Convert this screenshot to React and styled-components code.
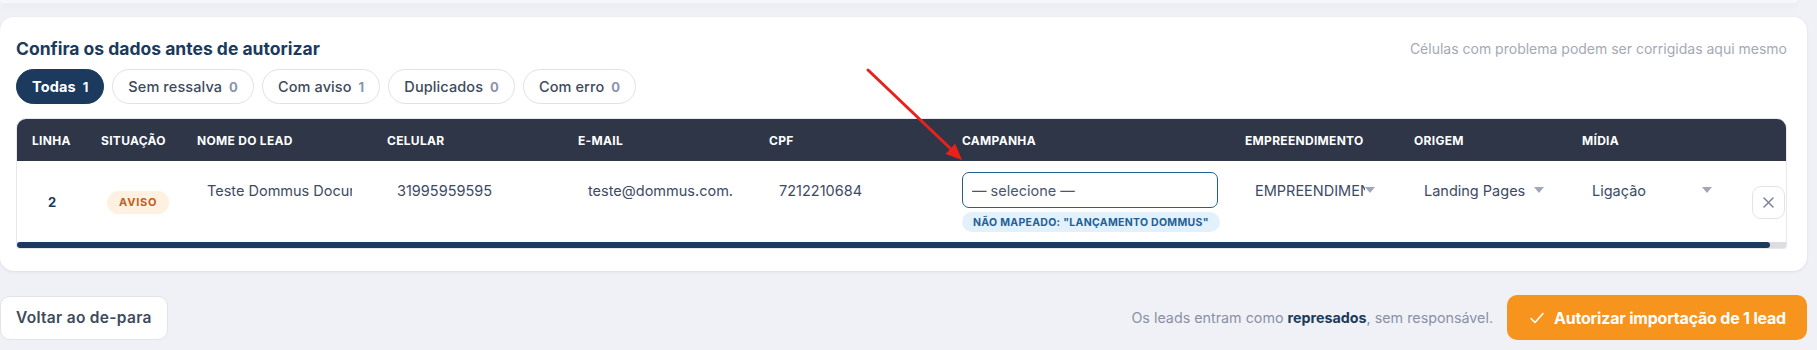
import React from "react";
import styled, { createGlobalStyle } from "styled-components";

const GlobalStyle = createGlobalStyle`
  html, body { margin: 0; padding: 0; background: #f0f1f6; }
  body { font-family: Inter, "Noto Sans", sans-serif; color: #3d4a66; }
  *, *::before, *::after { box-sizing: border-box; }
`;

const Page = styled.div`
  position: relative;
  width: 1817px;
  padding: 0 10px 20px 0;
`;

const PrevCard = styled.div`
  height: 3px;
  margin-right: 10px;
  background: #f6f7fa;
  border-radius: 0 0 14px 14px;
  box-shadow: 0 3px 8px rgba(30, 40, 70, 0.06);
`;

const Card = styled.section`
  margin-top: 14px;
  background: #fff;
  border-radius: 14px;
  padding: 20px 20px 22px 16px;
  box-shadow: 0 1px 3px rgba(20, 30, 60, 0.09);
`;

const TitleRow = styled.div`
  display: flex;
  justify-content: space-between;
  align-items: center;
  height: 22px;
`;

const Title = styled.h2`
  margin: 0;
  font-size: 17.5px;
  font-weight: 700;
  color: #1b3a5c;
`;

const Note = styled.span`
  font-size: 14px;
  color: #a4a9b6;
`;

const Pills = styled.div`
  display: flex;
  gap: 8px;
  margin-top: 10px;
`;

const Pill = styled.button`
  height: 35px;
  padding: 0 15px;
  border-radius: 18px;
  border: 1px solid ${(p) => (p.$active ? "#1b3a5e" : "#dfe2e8")};
  background: ${(p) => (p.$active ? "#1b3a5e" : "#fff")};
  color: ${(p) => (p.$active ? "#fff" : "#3d4a5c")};
  font-family: inherit;
  font-size: 14.5px;
  letter-spacing: 0.1px;
  font-weight: ${(p) => (p.$active ? 700 : 500)};
  display: inline-flex;
  align-items: center;
  gap: 7px;
`;

const Count = styled.span`
  font-weight: 700;
  font-size: 13px;
  color: ${(p) => (p.$active ? "#fff" : "#8c93b0")};
`;

const TableWrap = styled.div`
  margin-top: 14px;
  border: 1px solid #e6e8ec;
  border-radius: 10px 10px 3px 3px;
  overflow: hidden;
`;

const GridRow = styled.div`
  display: grid;
  grid-template-columns: 69px 96px 190px 191px 191px 193px 283px 169px 168px 170px 34px;
  padding: 0 16px 0 15px;
  width: max-content;
  min-width: 100%;
`;

const HeadRow = styled(GridRow)`
  background: #2e3648;
  height: 42px;
  align-items: center;
`;

const HeadCell = styled.div`
  color: #fff;
  font-size: 12px;
  font-weight: 700;
  text-transform: uppercase;
  letter-spacing: 0.3px;
  white-space: nowrap;
`;

const BodyRow = styled(GridRow)`
  min-height: 81px;
  align-items: start;
  padding-top: 11px;
  padding-bottom: 10px;
  background: #fff;
`;

const LineNo = styled.div`
  align-self: center;
  padding-left: 16px;
  font-size: 13px;
  font-weight: 700;
  color: #1b3a5c;
`;

const StatusBadge = styled.span`
  align-self: center;
  justify-self: start;
  margin-left: 6px;
  height: 23px;
  padding: 0 12px;
  border-radius: 12px;
  background: #fef1e2;
  color: #c0601a;
  font-size: 11px;
  font-weight: 700;
  letter-spacing: 0.8px;
  display: inline-flex;
  align-items: center;
`;

const CellInput = styled.input`
  width: 165px;
  height: 36px;
  padding: 0 9px;
  border: 1px solid transparent;
  border-radius: 6px;
  background: transparent;
  font-family: inherit;
  font-size: 14.5px;
  color: #3d4a66;
  outline: none;
`;

const CampaignCell = styled.div`
  display: flex;
  flex-direction: column;
  align-items: flex-start;
  gap: 4px;
`;

const CampaignSelect = styled.select`
  appearance: none;
  width: 256px;
  height: 36px;
  border: 1.5px solid #22608f;
  border-radius: 7px;
  padding: 0 9px;
  background: #fff;
  font-family: inherit;
  font-size: 14.5px;
  color: #4a5670;
  outline: none;
`;

const Unmapped = styled.span`
  height: 20px;
  padding: 0 11px;
  border-radius: 10px;
  background: #e3f1fc;
  color: #1d6197;
  font-size: 10.5px;
  font-weight: 700;
  letter-spacing: 0.3px;
  display: inline-flex;
  align-items: center;
  white-space: nowrap;
`;

const SelectWrap = styled.div`
  position: relative;
  width: 138px;
  height: 36px;
`;

const PlainSelect = styled.select`
  appearance: none;
  width: 100%;
  height: 100%;
  border: none;
  background: transparent;
  padding: 0 18px 0 10px;
  font-family: inherit;
  font-size: 14.5px;
  color: #3d4a66;
  outline: none;
`;

const Caret = styled.svg`
  position: absolute;
  right: 8px;
  top: 50%;
  transform: translateY(-50%);
  pointer-events: none;
`;

const CloseBtn = styled.button`
  align-self: center;
  width: 33px;
  height: 33px;
  border: 1px solid #e1e3ea;
  border-radius: 9px;
  background: #fff;
  display: flex;
  align-items: center;
  justify-content: center;
  padding: 0;
`;

const ScrollTrack = styled.div`
  height: 6px;
  background: #dcdde0;
`;

const ScrollThumb = styled.div`
  height: 100%;
  width: ${(p) => p.$ratio * 100}%;
  background: #1b3a5e;
  border-radius: 3px;
`;

const Footer = styled.div`
  display: flex;
  justify-content: space-between;
  align-items: center;
  margin-top: 24px;
`;

const BackBtn = styled.button`
  height: 44px;
  padding: 0 15px;
  border: 1px solid #e2e4e9;
  border-radius: 10px;
  background: #fff;
  font-family: inherit;
  font-size: 15.5px;
  letter-spacing: 0.3px;
  font-weight: 600;
  color: #3d4a5c;
`;

const FootRight = styled.div`
  display: flex;
  align-items: center;
  gap: 14px;
`;

const FootNote = styled.span`
  font-size: 14.3px;
  color: #8a90a8;
  strong { color: #1b3a5c; font-weight: 700; }
`;

const AuthBtn = styled.button`
  height: 45px;
  padding: 0 21px 0 23px;
  border: none;
  border-radius: 10px;
  background: #f7941d;
  color: #fff;
  font-family: inherit;
  font-size: 16px;
  font-weight: 700;
  letter-spacing: -0.2px;
  display: flex;
  align-items: center;
  gap: 10px;
`;

const Annotation = styled.svg`
  position: absolute;
  left: 860px;
  top: 62px;
  pointer-events: none;
`;

const Arrow = () => (
  <Caret width="10" height="6" viewBox="0 0 10 6">
    <path d="M0 0 H10 L5 6 Z" fill="#a3a7b3" />
  </Caret>
);

const Dropdown = ({ value }) => (
  <SelectWrap>
    <PlainSelect defaultValue={value}>
      <option>{value}</option>
    </PlainSelect>
    <Arrow />
  </SelectWrap>
);

const filters = [
  ["Todas", 1, true],
  ["Sem ressalva", 0],
  ["Com aviso", 1],
  ["Duplicados", 0],
  ["Com erro", 0],
];

const headers = [
  "Linha", "Situação", "Nome do lead", "Celular", "E-mail", "CPF",
  "Campanha", "Empreendimento", "Origem", "Mídia", "",
];

export default function App() {
  return (
    <Page>
      <GlobalStyle />
      <PrevCard />
      <Card>
        <TitleRow>
          <Title>Confira os dados antes de autorizar</Title>
          <Note>Células com problema podem ser corrigidas aqui mesmo</Note>
        </TitleRow>
        <Pills>
          {filters.map(([label, n, active]) => (
            <Pill key={label} $active={active}>
              {label}
              <Count $active={active}>{n}</Count>
            </Pill>
          ))}
        </Pills>
        <TableWrap>
          <HeadRow>
            {headers.map((h, i) => (
              <HeadCell key={i}>{h}</HeadCell>
            ))}
          </HeadRow>
          <BodyRow>
            <LineNo>2</LineNo>
            <StatusBadge>AVISO</StatusBadge>
            <CellInput defaultValue="Teste Dommus Documentação" />
            <CellInput defaultValue="31995959595" />
            <CellInput defaultValue="teste@dommus.com.br" />
            <CellInput defaultValue="7212210684" />
            <CampaignCell>
              <CampaignSelect defaultValue="">
                <option value="">— selecione —</option>
              </CampaignSelect>
              <Unmapped>NÃO MAPEADO: "LANÇAMENTO DOMMUS"</Unmapped>
            </CampaignCell>
            <Dropdown value="EMPREENDIMENTO 1" />
            <Dropdown value="Landing Pages" />
            <Dropdown value="Ligação" />
            <CloseBtn aria-label="Remover">
              <svg width="11" height="11" viewBox="0 0 11 11">
                <path d="M1 1 L10 10 M10 1 L1 10" stroke="#7d82a0" strokeWidth="1.5" strokeLinecap="round" />
              </svg>
            </CloseBtn>
          </BodyRow>
          <ScrollTrack>
            <ScrollThumb $ratio={0.991} />
          </ScrollTrack>
        </TableWrap>
      </Card>
      <Footer>
        <BackBtn>Voltar ao de-para</BackBtn>
        <FootRight>
          <FootNote>
            Os leads entram como <strong>represados</strong>, sem responsável.
          </FootNote>
          <AuthBtn>
            <svg width="14" height="12" viewBox="0 0 14 12">
              <path d="M1 6.5 L5 10.5 L13 1.5" fill="none" stroke="#fff" strokeWidth="1.6" strokeLinecap="round" strokeLinejoin="round" />
            </svg>
            Autorizar importação de 1 lead
          </AuthBtn>
        </FootRight>
      </Footer>
      <Annotation width="110" height="105" viewBox="0 0 110 105">
        <line x1="8" y1="8" x2="92" y2="88" stroke="#e8211b" strokeWidth="3" strokeLinecap="round" />
        <polygon points="102,98 85.6,92 95.2,81.8" fill="#e8211b" />
      </Annotation>
    </Page>
  );
}
